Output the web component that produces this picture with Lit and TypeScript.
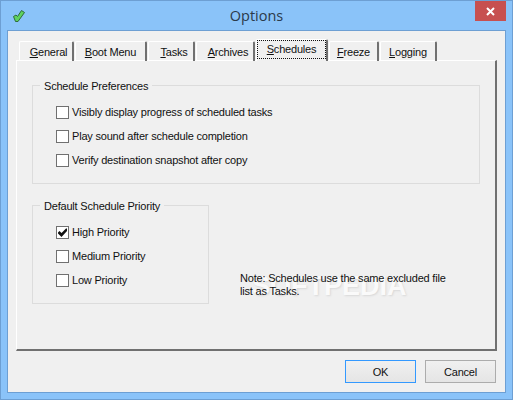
import { LitElement, css, html } from 'lit';
import { customElement } from 'lit/decorators.js';

const tabs = [
	{ key: 'G', rest: 'eneral', w: 55, nudge: 5 },
	{ key: 'B', rest: 'oot Menu', w: 72, nudge: 0 },
	{ key: 'T', rest: 'asks', w: 47, nudge: 6 },
	{ key: 'A', rest: 'rchives', w: 59, nudge: 6 },
	{ key: 'S', rest: 'chedules', w: 72, nudge: 0, active: true },
	{ key: 'F', rest: 'reeze', w: 50, nudge: 0 },
	{ key: 'L', rest: 'ogging', w: 57, nudge: 0 },
];

const check = (label: string, checked = false) => html`<div class="check">
	<span class="box">
		${checked
			? html`<svg width="11" height="11" viewBox="0 0 11 11"><path d="M1 5.5l1.5-1.5L4.5 6 9 1.5h1V4L4.5 10 1 6.5z" fill="#111" /></svg>`
			: ''}
	</span>
	<span>${label}</span>
</div>`;

@customElement('app-root')
export class AppRoot extends LitElement {
	static styles = css`
		:host {
			display: block;
			width: 513px;
			height: 400px;
			font-family: 'Liberation Sans', Arial, sans-serif;
			font-size: 11px;
			letter-spacing: -0.2px;
			color: #111;
		}
		.window {
			box-sizing: border-box;
			width: 513px;
			height: 400px;
			display: flex;
			flex-direction: column;
			background: #8ac3f9;
			border: 1px solid #6d9fd3;
			padding: 0 6px 6px;
			position: relative;
		}
		.titlebar {
			height: 29px;
			flex: none;
			display: flex;
			align-items: center;
			justify-content: center;
			position: relative;
		}
		.title {
			font-family: 'Open Sans', 'Liberation Sans', sans-serif;
			font-size: 14.5px;
			letter-spacing: 0;
			color: #2b3a4a;
		}
		.app-icon {
			position: absolute;
			left: 6px;
			top: 9px;
		}
		.close {
			position: absolute;
			right: 0;
			top: 0;
			width: 31px;
			height: 20px;
			background: #c75050;
			display: flex;
			align-items: center;
			justify-content: center;
		}
		.client {
			flex: 1;
			background: #f0f0f0;
			border: 1px solid #6d9fd3;
			padding: 9px 8px 0;
			display: flex;
			flex-direction: column;
		}
		.tabs {
			display: flex;
			align-items: flex-end;
			height: 21px;
			padding-left: 3px;
			position: relative;
			z-index: 1;
			margin-bottom: -1px;
		}
		.tab {
			box-sizing: border-box;
			height: 20px;
			border-top: 1px solid #fff;
			border-left: 1px solid #fff;
			border-right: 2px solid #707070;
			border-top-left-radius: 2px;
			border-top-right-radius: 2px;
			display: flex;
			justify-content: center;
			align-items: center;
			margin-right: 1px;
			flex: none;
		}
		.tab.active {
			height: 22px;
			background: #f0f0f0;
			padding-bottom: 2px;
			align-items: stretch;
		}
		.tab.active span {
			outline: 1px dotted #111;
			outline-offset: -1px;
			flex: 1;
			line-height: 19px;
			text-align: center;
		}
		.panel {
			box-sizing: border-box;
			width: 481px;
			height: 291px;
			border-top: 1px solid #fff;
			border-left: 1px solid #fff;
			border-right: 2px solid #707070;
			border-bottom: 2px solid #707070;
			padding: 24px 15px 0;
			position: relative;
		}
		.group {
			box-sizing: border-box;
			border: 1px solid #dcdcdc;
			height: 99px;
			position: relative;
			padding: 14px 23px 0;
			display: flex;
			flex-direction: column;
		}
		.legend {
			position: absolute;
			left: 7px;
			top: -7px;
			padding: 0 4px;
			background: #f0f0f0;
			line-height: 14px;
		}
		.check {
			height: 24px;
			display: flex;
			align-items: center;
			gap: 3px;
			white-space: nowrap;
		}
		.box {
			box-sizing: border-box;
			width: 13px;
			height: 13px;
			border: 1px solid #707070;
			background: #fff;
			display: flex;
			align-items: center;
			justify-content: center;
			flex: none;
		}
		.lower {
			display: flex;
			margin-top: 21px;
		}
		.lower .group {
			width: 177px;
			flex: none;
		}
		.note {
			margin: 67px 0 0 31px;
			line-height: 13px;
			width: 215px;
			position: relative;
			z-index: 1;
		}
		.mark {
			position: absolute;
			left: 235px;
			top: 210px;
			font-size: 27px;
			font-weight: 700;
			letter-spacing: 0;
			color: #fafafa;
			text-shadow: 1px 1px 2px #d8d8d8;
		}
		.buttons {
			display: flex;
			justify-content: flex-end;
			gap: 9px;
			margin-top: 9px;
			padding-right: 1px;
		}
		.btn {
			box-sizing: border-box;
			width: 71px;
			height: 23px;
			border: 1px solid #acacac;
			background: linear-gradient(#f0f0f0, #e5e5e5);
			font: inherit;
			letter-spacing: inherit;
			color: inherit;
			padding: 0;
		}
		.btn.default {
			border-color: #3399ff;
		}
	`;

	render() {
		return html`<div class="window">
			<div class="titlebar">
				<svg class="app-icon" width="12" height="13" viewBox="0 0 12 13">
					<path d="M0.5 6.5L3 5 4.5 6.5 8.5 0.5 11.5 2.5 5 11.5H2.5z" fill="#5fd35f" stroke="#2f6b3a" />
				</svg>
				<div class="title">Options</div>
				<div class="close">
					<svg width="9" height="9" viewBox="0 0 9 9"><path d="M1 1l7 7M8 1L1 8" stroke="#fff" stroke-width="2" /></svg>
				</div>
			</div>
			<div class="client">
				<div class="tabs">
					${tabs.map(
						(t) => html`<div
							class="tab ${t.active ? 'active' : ''}"
							style="width:${t.w}px;padding-left:${t.nudge}px"
						>
							<span><u>${t.key}</u>${t.rest}</span>
						</div>`,
					)}
				</div>
				<div class="panel">
					<div class="group">
						<div class="legend">Schedule Preferences</div>
						${check('Visibly display progress of scheduled tasks')}
						${check('Play sound after schedule completion')}
						${check('Verify destination snapshot after copy')}
					</div>
					<div class="lower">
						<div class="group">
							<div class="legend">Default Schedule Priority</div>
							${check('High Priority', true)} ${check('Medium Priority')} ${check('Low Priority')}
						</div>
						<div class="note">Note: Schedules use the same excluded file list as Tasks.</div>
					</div>
					<div class="mark">SOFTPEDIA</div>
				</div>
				<div class="buttons">
					<button class="btn default">OK</button>
					<button class="btn">Cancel</button>
				</div>
			</div>
		</div>`;
	}
}
